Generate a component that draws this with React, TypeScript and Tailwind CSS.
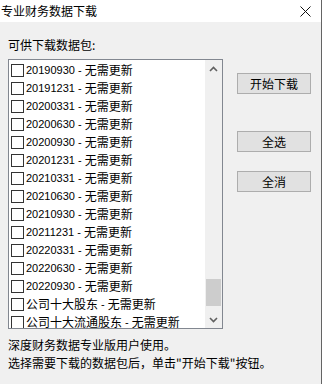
const cjk = "font-['Noto_Sans_CJK_SC',sans-serif]";
const latin = "font-['Liberation_Sans','Noto_Sans_CJK_SC',sans-serif]";

const dates = [
    '20190930', '20191231', '20200331', '20200630', '20200930', '20201231', '20210331',
    '20210630', '20210930', '20211231', '20220331', '20220630', '20220930',
];
const companies = ['公司十大股东', '公司十大流通股东'];

function Checkbox() {
    return <span className="w-[13px] h-[13px] border border-[#333333] bg-white shrink-0" />;
}

function Row({ children }: { children: React.ReactNode }) {
    return (
        <div className="flex items-center h-[18px] pl-[2px] whitespace-nowrap text-black">
            <Checkbox />
            <span className="ml-[2px] flex items-center">{children}</span>
        </div>
    );
}

function Chevron({ up }: { up?: boolean }) {
    return (
        <svg width="9" height="6" viewBox="0 0 9 6">
            <path
                d={up ? 'M1 5 L4.5 1.5 L8 5' : 'M1 1 L4.5 4.5 L8 1'}
                fill="none"
                stroke="#606060"
                strokeWidth="1.6"
            />
        </svg>
    );
}

function Button({ label }: { label: string }) {
    return (
        <div className={`w-[74px] h-[21px] border border-[#adadad] bg-[#e1e1e1] flex items-center justify-center text-[12px] leading-none text-black ${cjk}`}>
            {label}
        </div>
    );
}

export default function App() {
    return (
        <div className={`w-[322px] h-[384px] bg-[#f0f0f0] border-r border-[#646464] flex flex-col ${cjk}`}>
            {/* title bar */}
            <div className="h-[22px] bg-white flex items-center justify-between pl-[1px] pr-[10px]">
                <span className="text-[12px] leading-none text-black">专业财务数据下载</span>
                <svg width="11" height="11" viewBox="0 0 11 11">
                    <path d="M0.5 0.5 L10.5 10.5 M10.5 0.5 L0.5 10.5" stroke="#111" strokeWidth="1" />
                </svg>
            </div>

            <div className="flex px-[8px] pt-[14px]">
                <div className="w-[215px] flex flex-col">
                    <div className="h-[18px] leading-[18px] text-[12px] text-black">可供下载数据包:</div>
                    <div className="mt-[5px] h-[270px] border border-[#828790] bg-white flex overflow-hidden">
                        <div className="w-[196px] pt-[1px] overflow-hidden">
                            {dates.map((d) => (
                                <Row key={d}>
                                    <span className={`text-[11px] ${latin}`}>{d}&nbsp;-&nbsp;</span>
                                    <span className="text-[12px]">无需更新</span>
                                </Row>
                            ))}
                            {companies.map((c) => (
                                <Row key={c}>
                                    <span className="text-[12px]">{c}</span>
                                    <span className={`text-[11px] ${latin}`}>&nbsp;-&nbsp;</span>
                                    <span className="text-[12px]">无需更新</span>
                                </Row>
                            ))}
                        </div>
                        <div className="w-[17px] ml-auto bg-[#f0f0f0] flex flex-col">
                            <div className="h-[17px] flex items-center justify-center">
                                <Chevron up />
                            </div>
                            <div className="flex-1">
                                <div className="mt-[202px] mx-[1px] h-[27px] bg-[#cdcdcd]" />
                            </div>
                            <div className="h-[17px] flex items-center justify-center">
                                <Chevron />
                            </div>
                        </div>
                    </div>
                </div>

                <div className="ml-[14px] flex flex-col pt-[37px]">
                    <Button label="开始下载" />
                    <div className="mt-[37px]">
                        <Button label="全选" />
                    </div>
                    <div className="mt-[19px]">
                        <Button label="全消" />
                    </div>
                </div>
            </div>

            <div className="px-[8px] mt-[7px] text-[12px] text-black whitespace-nowrap">
                <div className="h-[18px] leading-[18px]">深度财务数据专业版用户使用。</div>
                <div className="h-[18px] leading-[18px]">选择需要下载的数据包后，单击"开始下载"按钮。</div>
            </div>
        </div>
    );
}
